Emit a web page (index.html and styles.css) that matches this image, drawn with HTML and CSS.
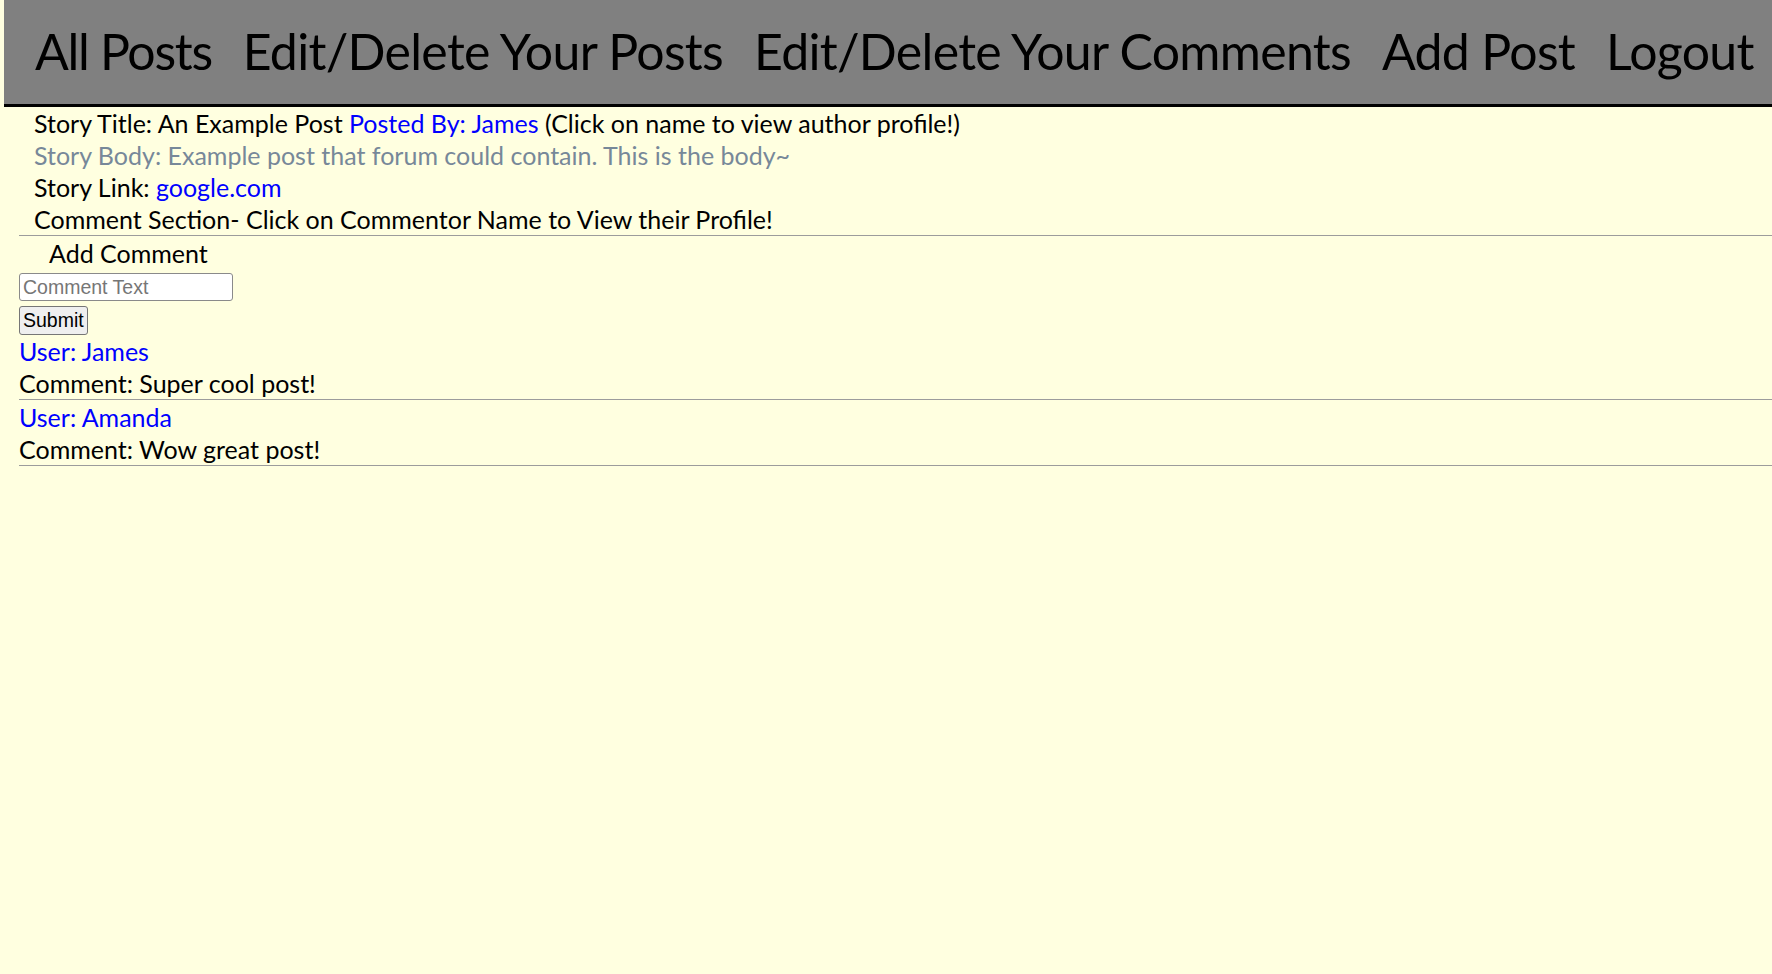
FILE: index.html
```html
<!DOCTYPE html>
<html lang="en">
<head>
<meta charset="utf-8">
<title>Story</title>
<link rel="stylesheet" href="styles.css">
</head>
<body>
<nav class="topnav">
  <a class="navlink navlink-first" href="#">All Posts</a>
  <a class="navlink" href="#">Edit/Delete Your Posts</a>
  <a class="navlink" href="#">Edit/Delete Your Comments</a>
  <a class="navlink" href="#">Add Post</a>
  <a class="navlink" href="#">Logout</a>
</nav>
<main class="content">
  <section class="story">
    <div class="line">Story Title: An Example Post <a class="blue" href="#">Posted By: James</a> (Click on name to view author profile!)</div>
    <div class="line body-text">Story Body: Example post that forum could contain. This is the body~</div>
    <div class="line">Story Link: <a class="blue" href="#">google.com</a></div>
    <div class="line">Comment Section- Click on Commentor Name to View their Profile!</div>
  </section>
  <hr class="rule">
  <form class="add-form">
    <div class="line add-title">Add Comment</div>
    <input class="comment-input" type="text" placeholder="Comment Text">
    <button class="submit-btn" type="button">Submit</button>
  </form>
  <div class="comment">
    <a class="line blue" href="#">User: James</a>
    <div class="line">Comment: Super cool post!</div>
  </div>
  <hr class="rule">
  <div class="comment">
    <a class="line blue" href="#">User: Amanda</a>
    <div class="line">Comment: Wow great post!</div>
  </div>
  <hr class="rule">
</main>
</body>
</html>
```
FILE: styles.css
```css
html, body {
  margin: 0;
  padding: 0;
}
body {
  background: #ffffe0;
  font-family: Lato, "Liberation Sans", sans-serif;
  color: #000;
  min-height: 974px;
}
.topnav {
  margin-left: 4px;
  height: 86px;
  padding: 18px 0 0 31px;
  background: #808080;
  border-bottom: 3px solid #000;
  display: flex;
  gap: 31px;
  white-space: nowrap;
}
.navlink {
  color: #000;
  text-decoration: none;
  font-size: 50px;
  letter-spacing: -0.7px;
  line-height: 66px;
}
.navlink-first {
  letter-spacing: -1.3px;
}
.content {
  padding-left: 19px;
}
.line {
  display: block;
  font-size: 25px;
  line-height: 32px;
}
.story .line {
  padding-left: 15px;
}
.body-text {
  color: #778899;
}
.blue {
  color: #0000ff;
  text-decoration: none;
}
.rule {
  margin: 0;
  height: 1px;
  border: 0;
  border-top: 1px solid #9c9c9c;
}
.add-form {
  display: flex;
  flex-direction: column;
  align-items: flex-start;
}
.add-title {
  padding-left: 30px;
}
.comment-input {
  box-sizing: border-box;
  margin: 4px 0 0 0;
  width: 214px;
  height: 28px;
  padding: 1px 3px;
  font-family: "Liberation Sans", Arial, sans-serif;
  font-size: 19.5px;
  border: 1px solid #8a8a8a;
  border-radius: 3px;
  background: #fff;
}
.comment-input::placeholder {
  color: #767676;
}
.submit-btn {
  box-sizing: border-box;
  margin: 5px 0 0 0;
  height: 29px;
  padding: 0 3px;
  font-family: "Liberation Sans", Arial, sans-serif;
  font-size: 19.5px;
  color: #000;
  background: #efefef;
  border: 1px solid #767676;
  border-radius: 3px;
}
.comment {
  display: flex;
  flex-direction: column;
}
```
